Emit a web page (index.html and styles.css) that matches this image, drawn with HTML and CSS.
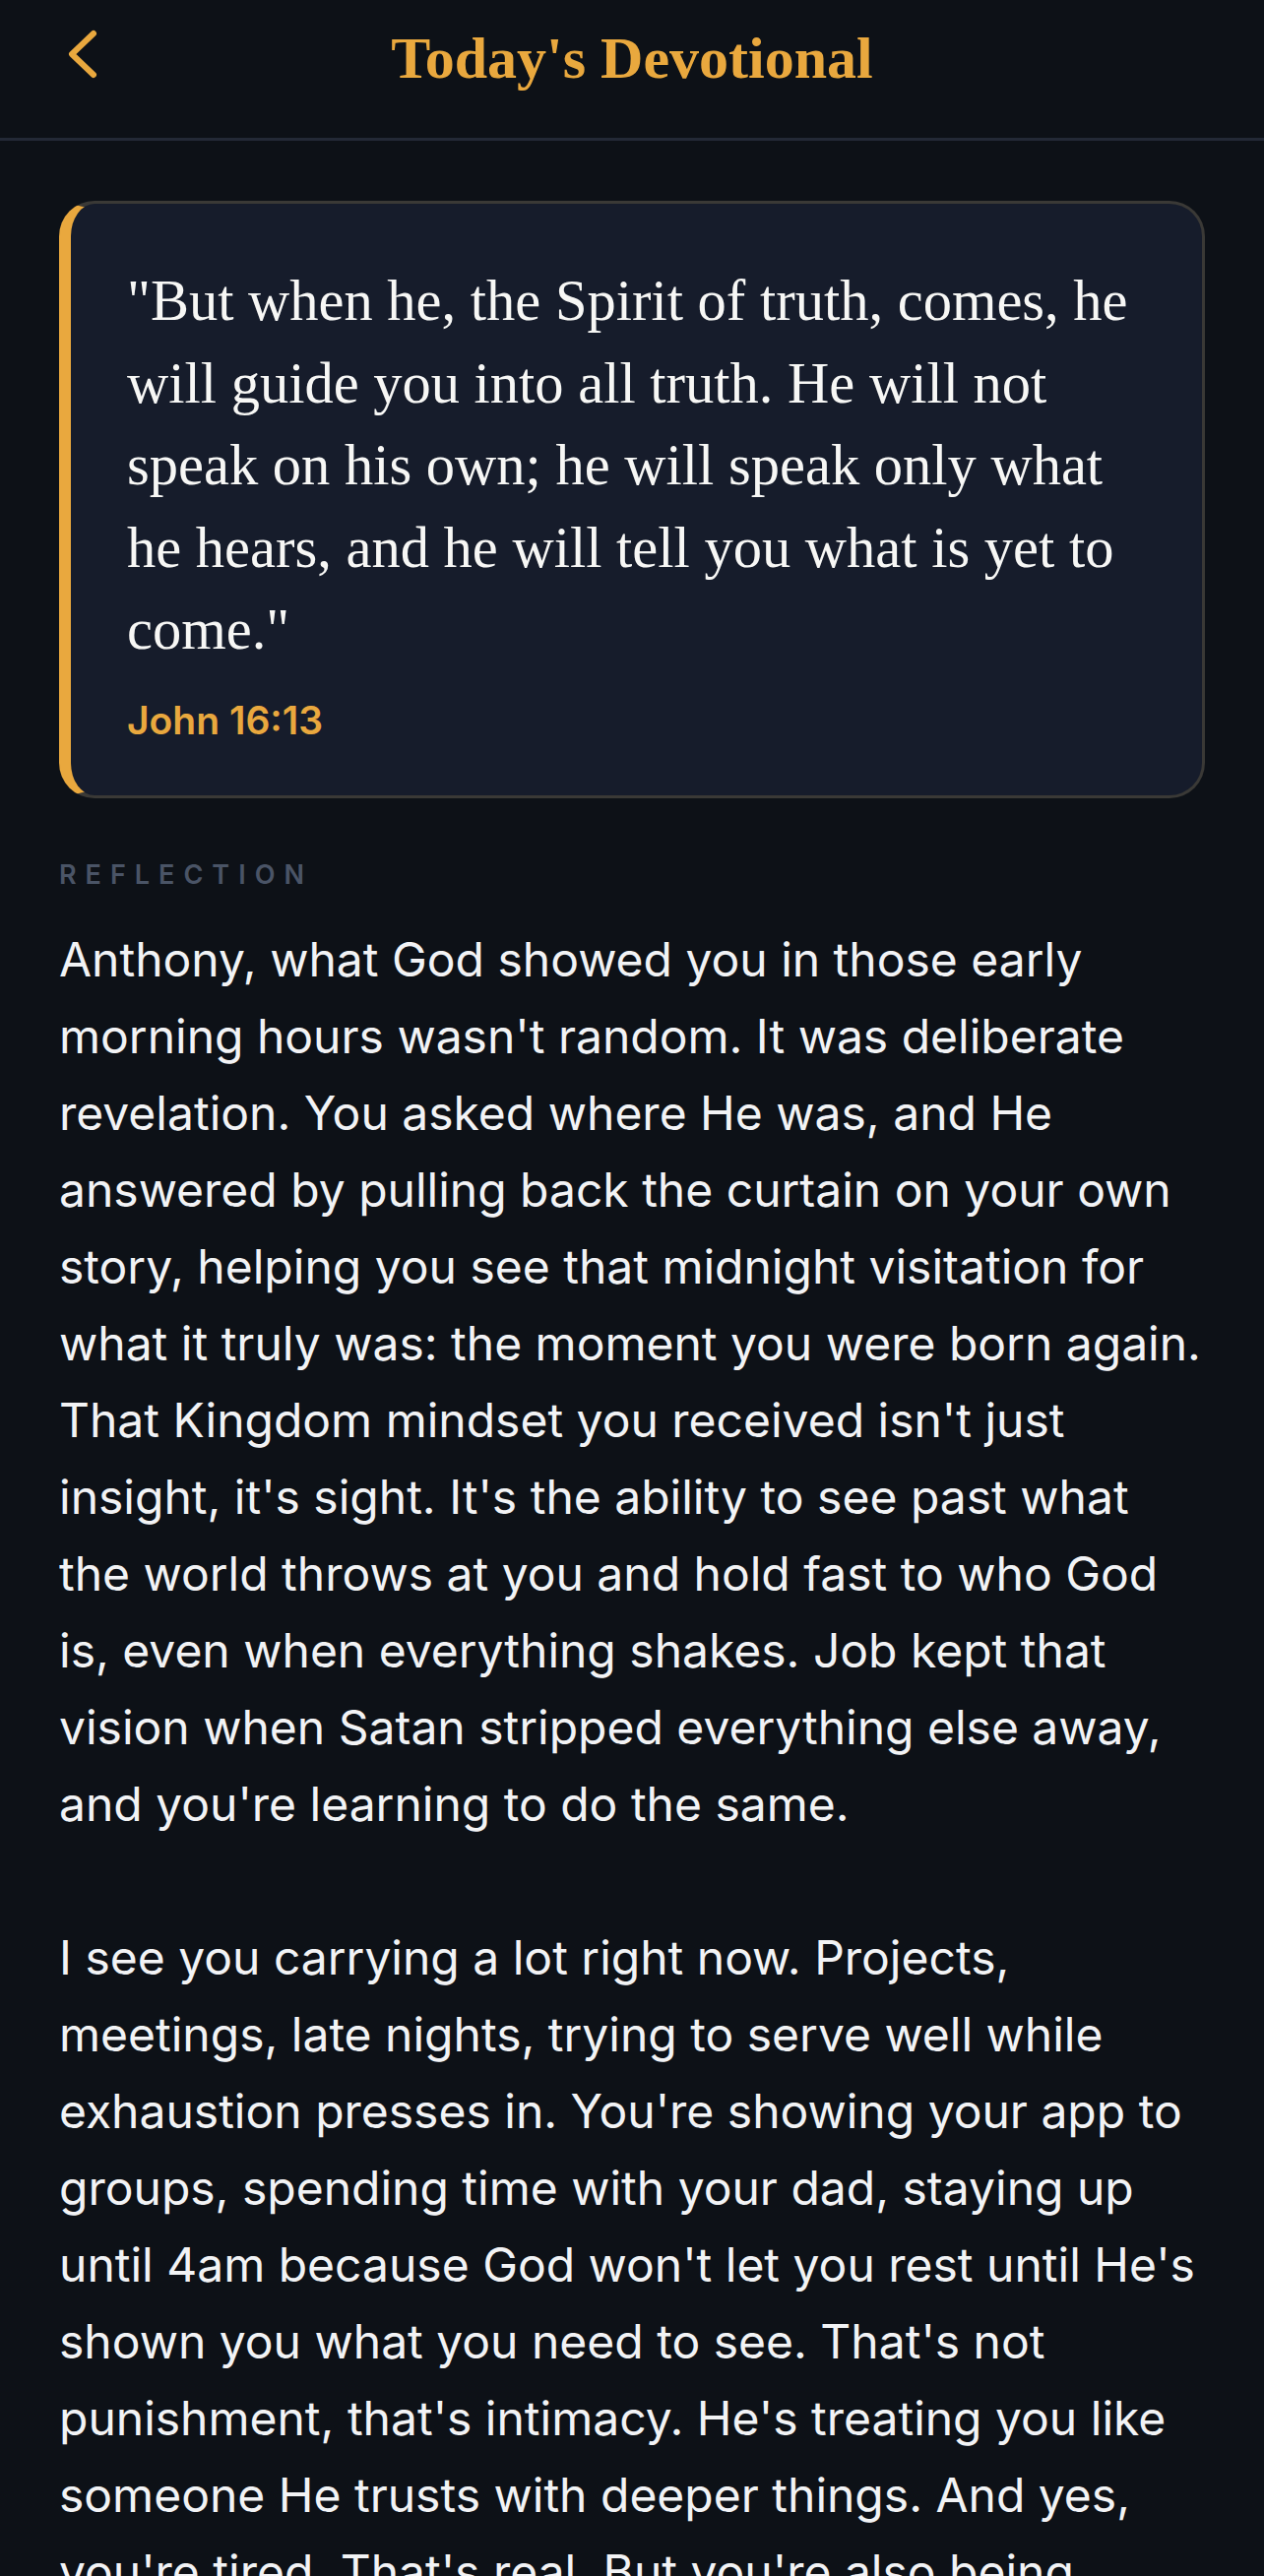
FILE: index.html
```html
<!DOCTYPE html>
<html lang="en">

<head>
    <meta charset="UTF-8">
    <meta name="viewport" content="width=device-width, initial-scale=1.0">
    <title>Today's Devotional</title>
    <link rel="stylesheet" href="styles.css">
</head>

<body>
    <header class="topbar">
        <a class="back" href="#" aria-label="Back">
            <svg width="44" height="52" viewBox="0 0 44 52" fill="none">
                <path d="M35 5 L13 26 L35 47" stroke="#e9a83e" stroke-width="6" stroke-linecap="round"
                    stroke-linejoin="round" />
            </svg>
        </a>
        <h1 class="title">Today's Devotional</h1>
        <div></div>
    </header>

    <main class="page">
        <section class="verse-card">
            <p class="verse">"But when he, the Spirit of truth, comes, he will guide you into all truth. He will not
                speak on his own; he will speak only what he hears, and he will tell you what is yet to come."</p>
            <p class="verse-ref">John 16:13</p>
        </section>

        <h2 class="label">Reflection</h2>

        <div class="reflection">
            <p>Anthony, what God showed you in those early morning hours wasn't random. It was deliberate revelation.
                You asked where He was, and He answered by pulling back the curtain on your own story, helping you see
                that midnight visitation for what it truly was: the moment you were born again. That Kingdom mindset
                you received isn't just insight, it's sight. It's the ability to see past what the world throws at you
                and hold fast to who God is, even when everything shakes. Job kept that vision when Satan stripped
                everything else away, and you're learning to do the same.</p>
            <p>I see you carrying a lot right now. Projects, meetings, late nights, trying to serve well while
                exhaustion presses in. You're showing your app to groups, spending time with your dad, staying up until
                4am because God won't let you rest until He's shown you what you need to see. That's not punishment,
                that's intimacy. He's treating you like someone He trusts with deeper things. And yes, you're tired.
                That's real. But you're also being</p>
        </div>
    </main>
</body>

</html>
```
FILE: styles.css
```css
* {
    margin: 0;
    padding: 0;
    box-sizing: border-box;
}

body {
    background-color: #0d1117;
    color: #f2f3f5;
    font-family: Inter, 'Noto Sans', sans-serif;
}

.topbar {
    height: 143px;
    padding: 29px 60px 0 60px;
    display: grid;
    grid-template-columns: 1fr auto 1fr;
    align-items: start;
    border-bottom: 3px solid #232936;
}

.back {
    display: block;
    width: 44px;
    height: 52px;
}

.back svg {
    display: block;
}

.title {
    font-family: 'Liberation Serif', 'Times New Roman', serif;
    font-weight: 700;
    font-size: 60px;
    line-height: 60px;
    color: #e9a83e;
}

.page {
    padding: 61px 60px 60px 60px;
}

.verse-card {
    background-color: #161c2b;
    border: 3px solid #3a3936;
    border-left: 12px solid #e9a83e;
    border-radius: 36px;
    padding: 57px 57px 52px 57px;
}

.verse {
    font-family: 'Liberation Serif', 'Times New Roman', serif;
    font-size: 58.5px;
    line-height: 83.5px;
    color: #f7f7f5;
}

.verse-ref {
    margin-top: 26px;
    font-size: 39px;
    line-height: 48px;
    font-weight: 600;
    color: #e9a83e;
}

.label {
    margin-top: 60px;
    font-size: 27px;
    line-height: 36px;
    font-weight: 600;
    letter-spacing: 9px;
    text-transform: uppercase;
    color: #4a5466;
}

.reflection {
    margin-top: 29px;
    font-size: 48px;
    line-height: 78px;
}

.reflection p+p {
    margin-top: 78px;
}
```
